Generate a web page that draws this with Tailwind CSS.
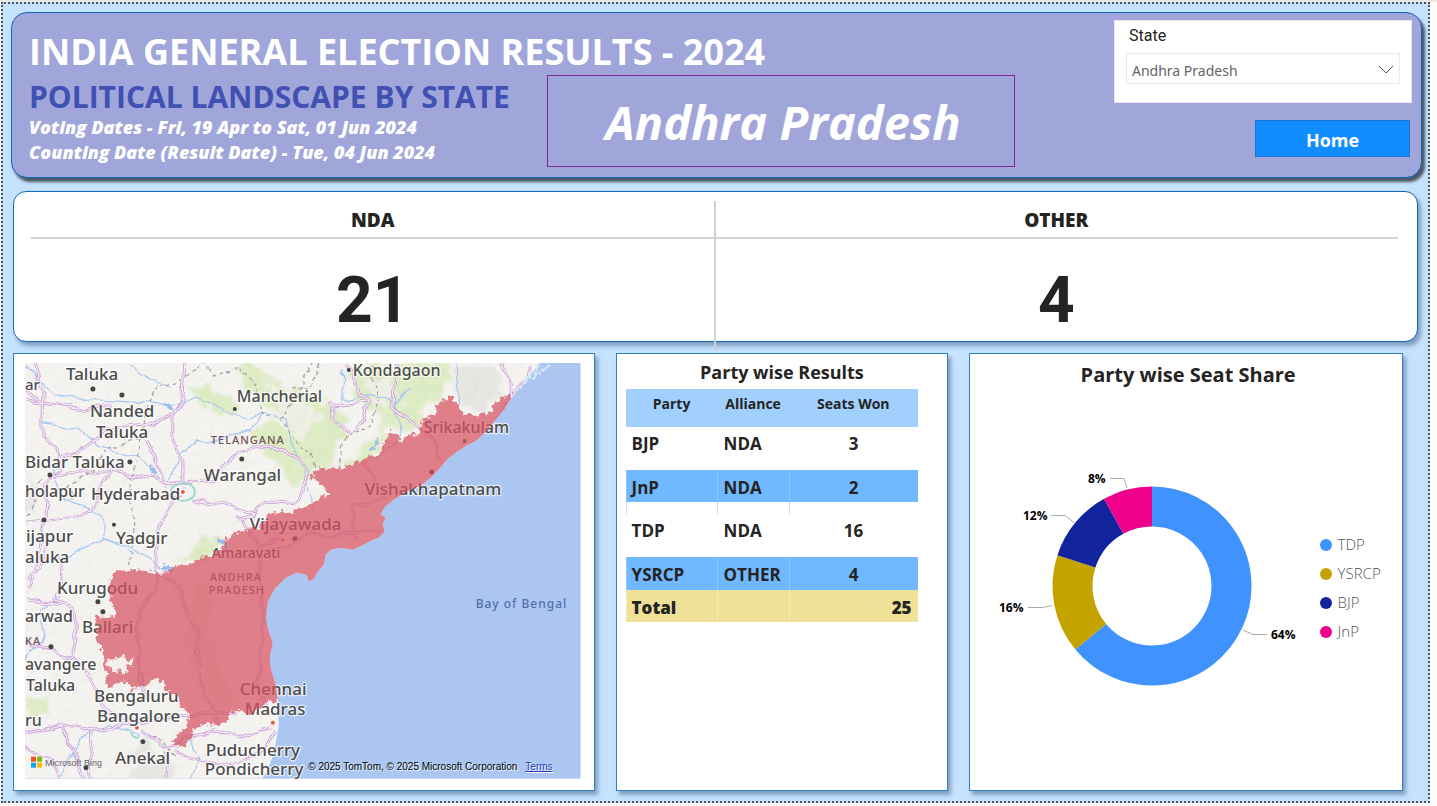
<!DOCTYPE html>
<html lang="en">
<head>
<meta charset="utf-8">
<meta name="viewport" content="width=device-width, initial-scale=1">
<title>India General Election Results - 2024</title>
<script src="https://cdn.jsdelivr.net/npm/@tailwindcss/browser@4"></script>
</head>
<body class="bg-[#fdfcfb] font-['Open_Sans','Noto_Sans',sans-serif] text-[#252423]">
<div class="border-t-2 border-[#e8e8e8]">
<main class="ml-px mr-[7px] border-2 border-dotted border-[#555] bg-[#c5e2ff] pl-2 pr-[6px] pt-2 pb-[10px]">

  <header class="flex rounded-[16px] border border-[#1068bf] bg-[#a0a6d9] pl-[17px] pr-[9px] pt-[7px] pb-[10px] shadow-[3px_4px_3px_#4b5661]">
    <div class="flex-1">
      <h1 class="whitespace-nowrap pt-[9px] text-[36px] leading-[46px] font-bold text-white">INDIA GENERAL ELECTION RESULTS - 2024</h1>
      <div class="flex">
        <div class="w-[518px] whitespace-nowrap">
          <h2 class="pt-1 text-[30px] leading-[36px] font-bold text-[#4150b3]">POLITICAL LANDSCAPE BY STATE</h2>
          <p class="text-[18px] leading-[25px] font-extrabold italic text-white">Voting Dates - Fri, 19 Apr to Sat, 01 Jun 2024</p>
          <p class="text-[18px] leading-[25px] font-extrabold italic text-white">Counting Date (Result Date) - Tue, 04 Jun 2024</p>
        </div>
        <div class="flex h-[92px] w-[468px] items-center justify-center border border-[#7f2a97] pl-1 text-[47px] font-bold italic text-white"><span class="pt-[2px]">Andhra Pradesh</span></div>
      </div>
    </div>
    <div class="flex w-[298px] flex-col">
      <div class="h-[83px] border border-[#e6e6f4] bg-white px-[11px] pt-[3px]">
        <label for="state" class="block pl-[3px] font-[Roboto] text-[16px] leading-6">State</label>
        <div class="relative mt-[5px]">
          <select id="state" class="h-[31px] w-full appearance-none border border-[#eaeaea] bg-white pt-[3px] pl-[5px] font-['Noto_Sans'] text-[14px] text-[#666]"><option>Andhra Pradesh</option></select>
          <svg class="pointer-events-none absolute right-[6px] top-[11px] h-[10px] w-4" viewBox="0 0 16 10" fill="none" stroke="#555"><path d="M1 2l7 7 7-7"/></svg>
        </div>
      </div>
      <button class="mt-[17px] mr-[2px] h-[37px] w-[155px] self-end border border-[#1b75d0] bg-[#118dff] pt-1 text-[18px] font-bold text-white">Home</button>
    </div>
  </header>

  <section class="mt-[13px] mr-1 ml-[2px] grid h-[151px] grid-cols-2 rounded-[13px] border border-[#1068bf] bg-white pr-[19px] pl-[17px] text-center shadow-[3px_4px_4px_#7f9dbd]">
    <div>
      <h3 class="border-b-2 border-[#d2d2d2] pt-[15px] pb-1 text-[19px] leading-[26px] font-extrabold">NDA</h3>
      <p class="pt-[30px] font-[Roboto] text-[64px] leading-[64px] font-bold">21</p>
    </div>
    <div class="relative">
      <h3 class="border-b-2 border-[#d2d2d2] pt-[15px] pb-1 text-[19px] leading-[26px] font-extrabold">OTHER</h3>
      <p class="pt-[30px] font-[Roboto] text-[64px] leading-[64px] font-bold">4</p>
      <div class="absolute top-[9px] left-0 h-[150px] w-[2px] -translate-x-1/2 bg-[#cfcfcf]"></div>
    </div>
  </section>

  <div class="mt-[11px] mr-[19px] ml-[2px] grid grid-cols-[582fr_333fr_434fr] gap-x-[21px]">
    <section class="border border-[#2f7fcb] bg-white pt-[9px] pr-[13px] pb-[11px] pl-[11px] shadow-[3px_4px_4px_#7f9dbd]">
      <div class="relative">
      <svg class="block w-full" viewBox="25 364 556 416" font-family="'Noto Sans','Open Sans',sans-serif" role="img" aria-label="Map of Andhra Pradesh">
        <defs>
          <clipPath id="land"><path d="M25 364H540L531 376 520 390 510 401 505 410 494 423 484 435 476 442 466 447 457 453 449 459 441 468 433 477 422 486 408 492 395 500 385 508 381 515 386 519 383 525 385 533 379 539 371 542 362 547 353 551 341 549 331 551 326 556 324 566 318 573 314 580 309 583 307 576 297 574 286 579 275 590 268 603 266 620 269 633 273 644 270 658 271 670 276 686 278 703 279 727 274 755 267 773 262 780H25Z"/></clipPath>
          <filter id="rough" x="-5%" y="-5%" width="110%" height="110%"><feTurbulence type="fractalNoise" baseFrequency=".22" numOctaves="2" seed="4"/><feDisplacementMap in="SourceGraphic" scale="9" xChannelSelector="R" yChannelSelector="G"/></filter>
          <filter id="wiggle" x="-5%" y="-5%" width="110%" height="110%"><feTurbulence type="fractalNoise" baseFrequency=".05" numOctaves="2" seed="9"/><feDisplacementMap in="SourceGraphic" scale="11" xChannelSelector="R" yChannelSelector="G"/></filter>
          <filter id="soft" x="-20%" y="-20%" width="140%" height="140%"><feTurbulence type="fractalNoise" baseFrequency=".06" numOctaves="3" seed="2"/><feDisplacementMap in="SourceGraphic" scale="26" xChannelSelector="R" yChannelSelector="G"/><feGaussianBlur stdDeviation="1.5"/></filter>
          <filter id="relief" x="0" y="0" width="100%" height="100%"><feTurbulence type="fractalNoise" baseFrequency=".09" numOctaves="3" seed="7" result="n"/><feDiffuseLighting in="n" surfaceScale="2" lighting-color="#fff"><feDistantLight azimuth="225" elevation="60"/></feDiffuseLighting></filter>
        </defs>
        <rect x="25" y="364" width="556" height="416" fill="#abc6f1"/>
        <g clip-path="url(#land)">
          <rect x="25" y="364" width="556" height="416" fill="#f4f3f0"/>
          <g fill="#d5e8b0" opacity=".75" filter="url(#soft)">
            <path d="M185 388L205 384 232 400 240 412 222 418 196 402Z"/>
            <path d="M236 364H262L270 380 290 390 330 402 350 420 340 440 330 464 310 470 292 450 290 420 262 404 246 384Z"/>
            <path d="M250 430L280 425 305 450 318 470 306 490 285 470 262 452Z"/>
            <path d="M350 372L410 364H450L448 392 425 412 410 432 390 428 370 412 355 396Z"/>
            <path d="M340 470L368 440 392 420 380 455 356 466Z"/>
            <path d="M180 560L200 545 222 540 218 556 196 562Z"/>
            <path d="M25 700L45 698 50 716 30 722Z"/>
            <path opacity=".5" d="M195 580L214 590 206 630 220 670 238 700 226 712 205 690 190 650 186 610Z"/>
          </g>
          <g fill="#f2f1ec" opacity=".8" filter="url(#soft)"><path d="M262 376L290 400 320 410 312 440 290 430 276 400Z"/><path d="M362 384L392 376 400 400 380 410Z"/></g>
          <g fill="#e6e5e1" filter="url(#soft)"><path d="M455 366L500 372 505 396 484 412 462 400Z"/><path d="M25 480L42 490 38 516H25Z"/><path d="M140 742L170 762 178 780H130Z"/></g>
          <rect x="25" y="364" width="556" height="416" filter="url(#relief)" opacity=".1"/>
          <g fill="none" stroke="#a9c6f0" stroke-width="1.2" filter="url(#wiggle)">
            <path d="M25 366L55 396 80 400 112 402 150 404 172 406 196 398 225 412 252 420 264 412"/><path d="M264 412L252 432 220 440 196 442 180 458 166 488"/><path d="M264 412L285 420 290 446 306 470 308 492 316 510"/><path d="M40 422L80 430 100 448 140 458 160 480"/><path d="M50 470L65 500 90 508 104 520 104 540 130 546 150 560 166 572"/><path d="M46 566L80 550 108 540 136 554"/><path d="M343 368L342 400 372 396 396 404 410 390"/><path d="M455 364L460 404"/><path d="M396 404L400 440 384 450 374 462"/><path d="M25 660L45 640 40 610 60 598"/><path d="M60 780L80 740 110 725 140 738"/><path d="M130 365L150 382 172 388"/><path d="M190 740L200 760 190 780"/>
          </g>
          <g fill="none" stroke="#9bbcf0" stroke-width="4" filter="url(#rough)"><path d="M150 466l5 8M166 406l6 3M218 540l10 8M164 566l8 6M370 452l10-12"/></g>
          <g fill="none" stroke="#a5a4a0" stroke-width="1.3" stroke-dasharray="4 3" filter="url(#wiggle)">
            <path d="M206 364L190 374 176 384 156 388 146 416 140 440 108 450 88 474 70 486 72 500"/><path d="M140 440L134 470 132 500 134 530 132 560 130 572"/><path d="M204 364L214 376 240 370 256 390 262 414 280 420 296 402 304 378 314 364"/><path d="M280 420L292 440 310 455 318 470"/><path d="M372 364L378 400 372 425 346 440 338 468"/><path d="M25 516L36 500 42 480"/><path d="M146 735L166 742 176 760"/><path d="M290 390L310 388 320 364"/>
          </g>
          <g fill="none" stroke-linejoin="round" filter="url(#wiggle)">
            <g stroke="#cba3d5" stroke-width="3"><path id="roads" d="M33 364L43 392 42 420 42 436 58 452 62 470 48 480 46 516 38 560 26 590M25 402L56 406 84 410 100 406 112 406M25 394L43 404M184 364L182 400 172 420 172 438 182 460 182 486M172 418L150 424 110 430 84 450 60 460M146 440L155 458 166 480 182 486M48 480L80 472 110 472 140 478 180 484M110 472L100 495 92 510 70 520 25 524M182 490L172 510 158 530 156 560 156 572M182 486L215 480 236 452 270 446 300 460 306 480 298 505 268 502 255 516 225 505 190 500M255 516L240 520 256 540 262 556M348 364L360 396 368 402 364 420 350 438 332 420 332 406 368 402M398 364L396 380 394 410 420 430 435 440 440 462M504 364L508 384 510 400 496 418M531 364L528 380 510 400M50 540L40 570 25 580M60 556L62 580 54 600 74 608 76 640 72 658 90 680 100 700 116 716 136 728M25 600L72 606M25 642L72 660M25 736L60 726 90 732 130 726 150 722 186 716 215 716 236 714M58 724L78 760 84 780M92 732L90 780M140 732L168 748 190 740 210 732 240 738 270 728M168 752L166 780M175 752L200 762 230 768 260 756 274 730M25 750L50 760 60 780M158 574L156 590 140 612 138 640 140 680 150 700M160 574L180 592 188 620 198 636 200 680 212 710 218 726M280 540L262 550 260 590 266 630 258 670 258 690 268 712M262 556L310 536 350 536 380 530M365 464L385 500 350 506 356 540"/></g>
            <use href="#roads" stroke="#f6eff7" stroke-width="1.200"/>
          </g>
          <g fill="none" stroke="#9ed8cc" stroke-width="2"><ellipse cx="183" cy="493" rx="12" ry="9"/><path d="M131 732q1 8 8 7"/></g>
          <circle cx="183" cy="493" r="3.500" fill="#fff"/><circle cx="137" cy="729" r="4" fill="#fff"/>
        </g>
        <path d="M520 390L531 375 540 366" fill="none" stroke="#dcebf5" stroke-width="2" filter="url(#rough)"/>
        <path d="M533 380l8-8M542 372l10-7" stroke="#d8e8f6" stroke-width="3" filter="url(#rough)"/>
        <g fill="#444"><circle cx="93" cy="390" r="2.500"/><circle cx="122" cy="396" r="2.500"/><circle cx="235" cy="410" r="2"/><circle cx="349" cy="371" r="2"/><circle cx="242" cy="460" r="2.500"/><circle cx="130" cy="463" r="2.500"/><circle cx="50" cy="476" r="2.500"/><circle cx="44" cy="521" r="2.500"/><circle cx="114" cy="526" r="2"/><circle cx="295" cy="540" r="2.500"/><circle cx="465" cy="442" r="2"/><circle cx="432" cy="473" r="2.500"/><circle cx="98" cy="603" r="2.500"/><circle cx="103" cy="613" r="2.500"/><circle cx="51" cy="648" r="2.500"/><circle cx="143" cy="743" r="2.500"/><circle cx="86" cy="769" r="2.500"/></g>
        <g fill="#e8573f"><circle cx="183" cy="493" r="2"/><circle cx="137" cy="729" r="2"/><circle cx="283" cy="541" r="1.500"/><circle cx="273" cy="724" r="2"/></g>
        <g font-size="17" font-weight="500" fill="#4c4c4c" stroke="#fff" stroke-opacity=".7" stroke-width="2.500" stroke-linejoin="round" paint-order="stroke">
          <text x="66" y="381">Taluka</text><text x="25" y="391" font-size="15">ar</text>
          <text x="90" y="418">Nanded</text><text x="96" y="439">Taluka</text>
          <text x="25" y="469">Bidar Taluka</text>
          <text x="204" y="482">Warangal</text><text x="25" y="498" font-size="16">holapur</text><text x="91" y="501">Hyderabad</text>
          <text x="365" y="496">Vishakhapatnam</text><text x="250" y="531">Vijayawada</text>
          <text x="26" y="543">ijapur</text><text x="25" y="564">aluka</text><text x="116" y="545">Yadgir</text>
          <text x="57" y="595">Kurugodu</text><text x="25" y="623" font-size="16">arwad</text><text x="82" y="634">Ballari</text>
          <text x="25" y="671" font-size="16">avangere</text><text x="26" y="692" font-size="16">Taluka</text>
          <text x="94" y="703">Bengaluru</text><text x="97" y="723">Bangalore</text><text x="25" y="727" font-size="16">ru</text>
          <text x="240" y="696">Chennai</text><text x="245" y="716">Madras</text><text x="115" y="765">Anekal</text>
          <text x="206" y="757">Puducherry</text><text x="205" y="776">Pondicherry</text>
          <g font-size="16"><text x="237" y="403">Mancherial</text><text x="353" y="377">Kondagaon</text><text x="424" y="434">Srikakulam</text></g>
          <g font-size="14"><text x="212" y="559">Amaravati</text></g>
        </g>
        <g font-size="11" font-weight="500" fill="#6d5257" letter-spacing="1"><text x="211" y="445">TELANGANA</text><text x="210" y="582">ANDHRA</text><text x="209" y="595">PRADESH</text><text x="25" y="646">KA</text></g>
        <text x="476" y="609" font-size="12" font-weight="500" fill="#526fad" letter-spacing="1">Bay of Bengal</text>
        <g clip-path="url(#land)"><path filter="url(#rough)" fill="#d75363" opacity=".72" fill-rule="evenodd" d="M508 396L530 401 505 430 490 445 470 455 440 480 410 505 395 530 385 550 350 560 333 570 310 595 300 588 292 590 285 610 284 690 277 703 267 703 260 711 248 717 240 712 232 713 228 722 216 727 206 725 195 730 191 737 188 745 181 749 172 745 177 736 187 728 189 714 180 708 179 700 172 696 165 690 164 682 156 680 150 681 146 688 140 687 133 692 127 682 118 684 109 689 105 683 108 675 103 668 104 660 102 651 96 640 97 625 95 618 104 618 112 620 115 612 112 602 109 590 109 580 118 571 125 573 140 571 150 573 162 575 170 571 180 566 190 565 200 560 212 556 221 549 225 541 235 535 246 531 258 530 264 522 270 514 283 513 288 517 297 510 307 508 315 502 330 494 322 486 313 480 312 474 322 469 340 470 350 466 368 458 380 455 384 445 391 431 398 435 400 443 410 435 420 436 423 420 437 414 436 406 444 400 452 397 458 406 464 414 475 417 488 415 495 404ZM107 662L116 660 123 657 127 662 133 660 133 667 126 668 128 674 116 672 111 674Z"/></g>
        <path fill="#f25022" d="M31 758h5v5h-5z"/><path fill="#7fba00" d="M37 758h5v5h-5z"/><path fill="#00a4ef" d="M31 764h5v5h-5z"/><path fill="#ffb900" d="M37 764h5v5h-5z"/>
        <text x="45" y="767" font-size="9" font-family="'Liberation Sans',sans-serif" fill="#66666c">Microsoft Bing</text>
      </svg>
      <p class="absolute right-7 bottom-1 font-['Liberation_Sans'] text-[10px] leading-4 whitespace-pre text-black [text-shadow:1px_1px_1px_#fff]">© 2025 TomTom, © 2025 Microsoft Corporation<a href="#" class="ml-2 text-[#2d3bb8] underline">Terms</a></p>
      </div>
    </section>

    <section class="border border-[#2f7fcb] bg-white px-[9px] pt-1 shadow-[3px_4px_4px_#7f9dbd]">
      <h3 class="pb-[3px] text-center text-[18px] leading-7 font-bold">Party wise Results</h3>
      <table class="w-[292px] table-fixed border-collapse text-left text-[17px] leading-[26px] font-bold [&_td]:border-l [&_td]:border-[#9fd0ff]/60 [&_td]:align-top">
        <colgroup><col class="w-[91px]"><col class="w-[72px]"><col></colgroup>
        <thead><tr class="h-[38px] bg-[#a1d0ff] text-center align-top text-[14px] leading-[30px]"><th class="font-bold">Party</th><th class="font-bold">Alliance</th><th class="font-bold">Seats Won</th></tr></thead>
        <tbody>
          <tr class="h-[43px] [&_td]:border-transparent"><td class="pt-1 pl-[5px]">BJP</td><td class="pt-1 pl-[6px]">NDA</td><td class="pt-1 text-center">3</td></tr>
          <tr class="h-11 bg-[linear-gradient(#70b8ff_32px,#fff_32px)]"><td class="pt-[5px] pl-[5px]">JnP</td><td class="pt-[5px] pl-[6px]">NDA</td><td class="pt-[5px] text-center">2</td></tr>
          <tr class="h-[43px] [&_td]:border-transparent"><td class="pt-1 pl-[5px]">TDP</td><td class="pt-1 pl-[6px]">NDA</td><td class="pt-1 text-center">16</td></tr>
          <tr class="h-[33px] bg-[#70b8ff]"><td class="pt-[5px] pl-[5px]">YSRCP</td><td class="pt-[5px] pl-[6px]">OTHER</td><td class="pt-[5px] text-center">4</td></tr>
        </tbody>
        <tfoot><tr class="h-8 bg-[#f0e199] font-extrabold [&_td]:border-[#f5eab5]"><td class="pt-[5px] pl-[5px]">Total</td><td></td><td class="pt-[5px] pr-[6px] text-right">25</td></tr></tfoot>
      </table>
    </section>

    <section class="border border-[#2f7fcb] bg-white pt-[6px] shadow-[3px_4px_4px_#7f9dbd]">
      <h3 class="pl-1 text-center text-[20px] leading-[30px] font-bold">Party wise Seat Share</h3>
      <div class="flex items-center justify-center pt-[69px] pr-[6px]">
        <svg class="h-60 w-[320px]" viewBox="986 460 320 240" role="img" aria-label="Seat share by party">
          <g fill="none" stroke-width="40">
            <path stroke="#4092ff" d="M1152 507.500A79.500 79.500 0 1 1 1090.740 637.680"/>
            <path stroke="#c4a200" d="M1090.740 637.680A79.500 79.500 0 0 1 1076.390 562.430"/>
            <path stroke="#12239e" d="M1076.390 562.430A79.500 79.500 0 0 1 1113.700 517.330"/>
            <path stroke="#ee008c" d="M1113.700 517.330A79.500 79.500 0 0 1 1152 507.500"/>
          </g>
          <g fill="none" stroke="#aaa"><path d="M1110 479.500h14l3 9.500M1051 516.500h14l9 7M1028 608.500h15l9-2M1243 631l10 4.500h14"/></g>
          <g font-family="'Open Sans',sans-serif" font-size="12" font-weight="700" fill="#000"><text x="1088" y="484">8%</text><text x="1023" y="521">12%</text><text x="999" y="613">16%</text><text x="1271" y="640">64%</text></g>
        </svg>
        <ul class="mt-[18px] ml-[14px] text-[15px] leading-[29px] font-light text-[#555]">
          <li class="flex items-center gap-[6px]"><span class="size-3 rounded-full bg-[#4092ff]"></span>TDP</li>
          <li class="flex items-center gap-[6px]"><span class="size-3 rounded-full bg-[#c4a200]"></span>YSRCP</li>
          <li class="flex items-center gap-[6px]"><span class="size-3 rounded-full bg-[#12239e]"></span>BJP</li>
          <li class="flex items-center gap-[6px]"><span class="size-3 rounded-full bg-[#ee008c]"></span>JnP</li>
        </ul>
      </div>
    </section>
  </div>
</main>
</div>
</body>
</html>
